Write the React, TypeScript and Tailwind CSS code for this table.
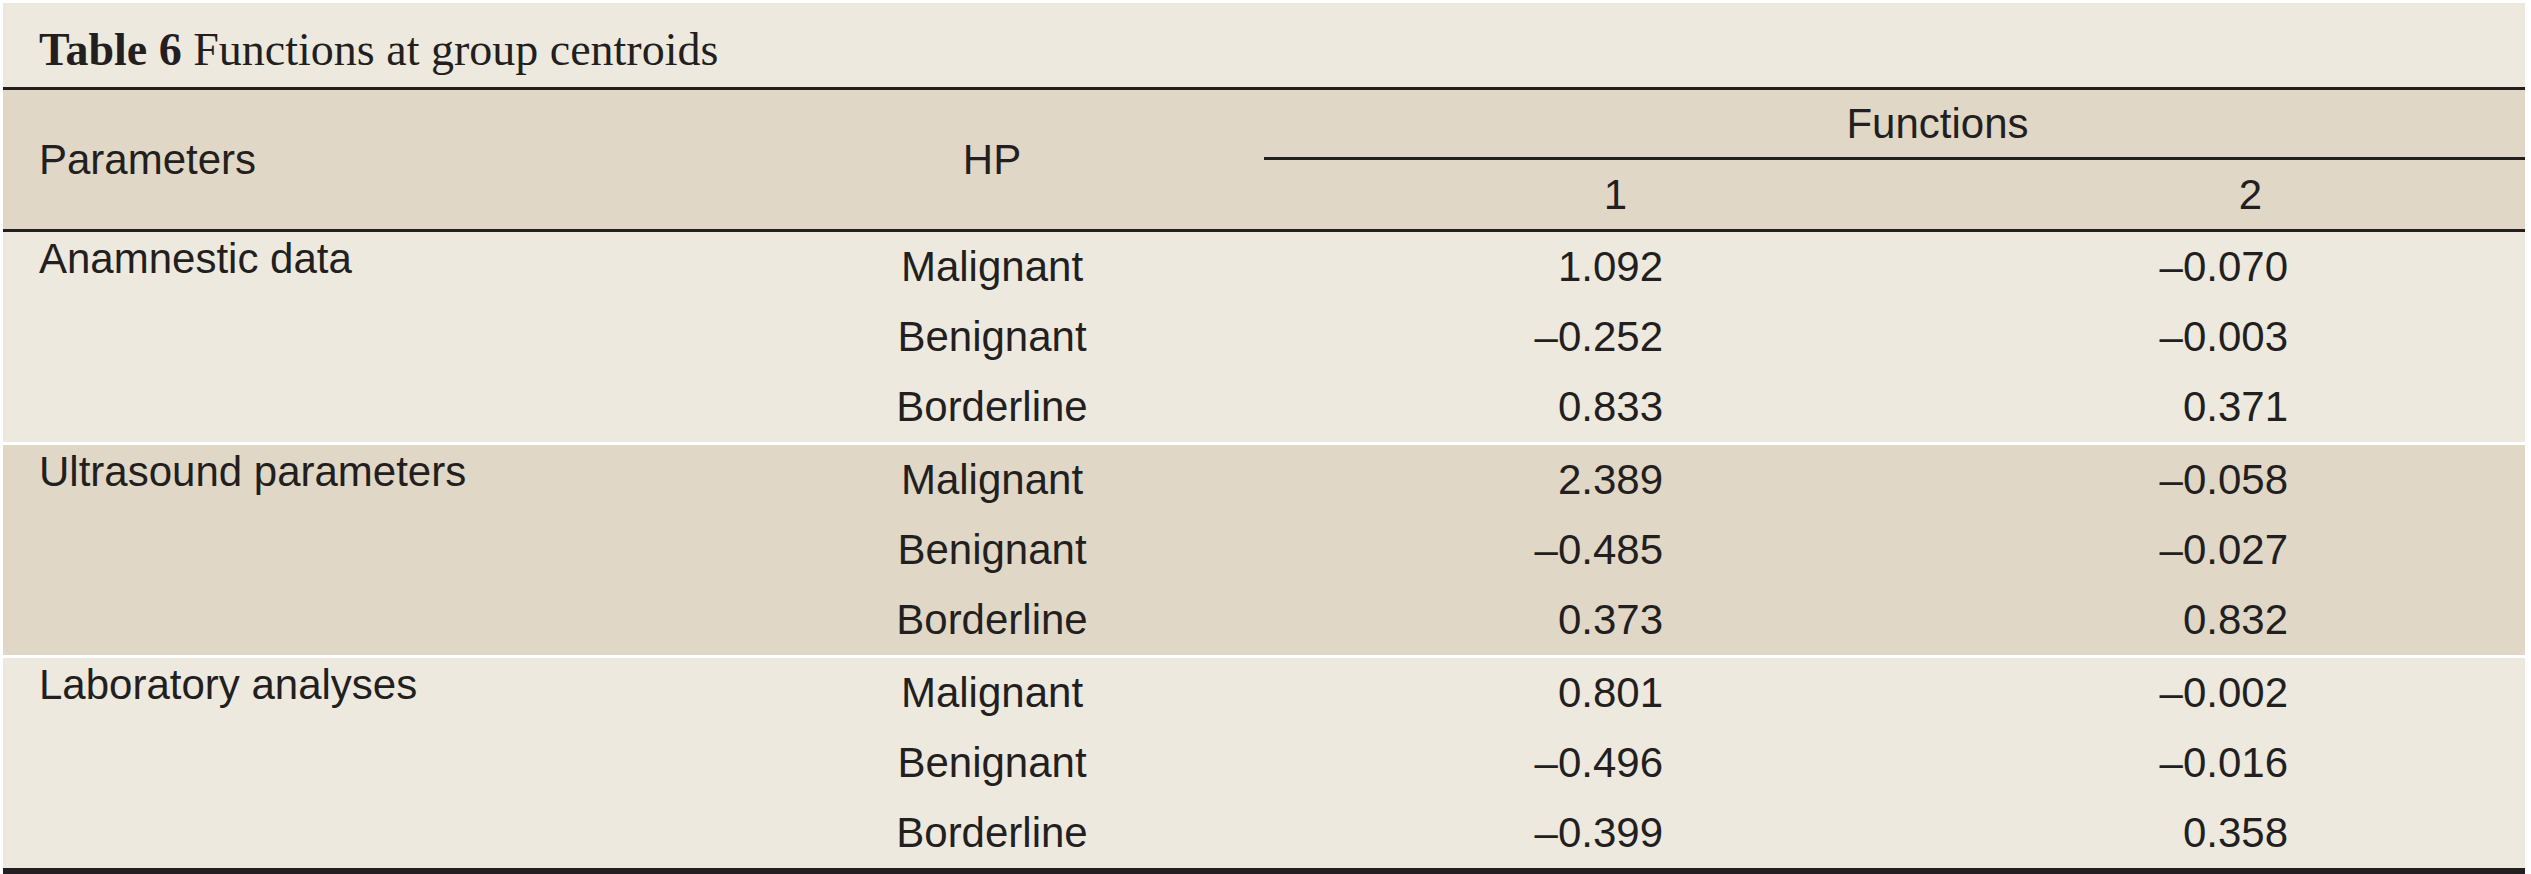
const groups = [
  {
    name: "Anamnestic data",
    bg: "bg-[#ede9df]",
    rows: [
      ["Malignant", "1.092", "–0.070"],
      ["Benignant", "–0.252", "–0.003"],
      ["Borderline", "0.833", "0.371"],
    ],
  },
  {
    name: "Ultrasound parameters",
    bg: "bg-[#e0d7c6]",
    rows: [
      ["Malignant", "2.389", "–0.058"],
      ["Benignant", "–0.485", "–0.027"],
      ["Borderline", "0.373", "0.832"],
    ],
  },
  {
    name: "Laboratory analyses",
    bg: "bg-[#ede9df]",
    rows: [
      ["Malignant", "0.801", "–0.002"],
      ["Benignant", "–0.496", "–0.016"],
      ["Borderline", "–0.399", "0.358"],
    ],
  },
];

const App = () => {
  return (
    <div className="w-[2531px] h-[874px] bg-white pt-[3px] pl-[3px] pr-[6px] text-[#231f20]">
      <div className="flex flex-col w-[2522px]">
        {/* title */}
        <div className="h-[74px] flex items-center pl-[36px] pt-[10px] bg-[#ede9df] border-b-[3px] border-[#231f20] box-content font-['Liberation_Serif',serif] text-[46px] leading-none">
          <span className="font-bold">Table 6</span>
          <span>&nbsp;Functions at group centroids</span>
        </div>

        {/* header */}
        <div className="grid grid-cols-[717px_544px_630px_631px] bg-[#e0d7c6] border-b-[3px] border-[#231f20] box-content font-['Liberation_Sans',Arial,sans-serif] text-[42px] leading-none">
          <div className="row-span-2 flex items-center pl-[36px]">Parameters</div>
          <div className="row-span-2 flex items-center justify-center">HP</div>
          <div className="col-span-2 h-[70px] flex items-center justify-center pl-[86px] border-b-[3px] border-[#231f20]">
            Functions
          </div>
          <div className="h-[69px] flex items-center justify-end pr-[267px]">1</div>
          <div className="h-[69px] flex items-center justify-end pr-[263px]">2</div>
        </div>

        {/* body */}
        {groups.map((group, gi) => (
          <div
            key={group.name}
            className={`grid grid-cols-[717px_544px_630px_631px] ${group.bg} ${gi > 0 ? "border-t-[3px] border-white" : ""} font-['Liberation_Sans',Arial,sans-serif] text-[42px] leading-none`}
          >
            {group.rows.map((row, ri) => (
              <div key={ri} className="contents">
                <div className="h-[70px] flex items-center pl-[36px] pb-[16px]">{ri === 0 ? group.name : ""}</div>
                <div className="h-[70px] flex items-center justify-center">{row[0]}</div>
                <div className="h-[70px] flex items-center justify-end pr-[231px]">{row[1]}</div>
                <div className="h-[70px] flex items-center justify-end pr-[237px]">{row[2]}</div>
              </div>
            ))}
          </div>
        ))}

        <div className="h-[6px] bg-[#231f20]"></div>
      </div>
    </div>
  );
};

export default App;
